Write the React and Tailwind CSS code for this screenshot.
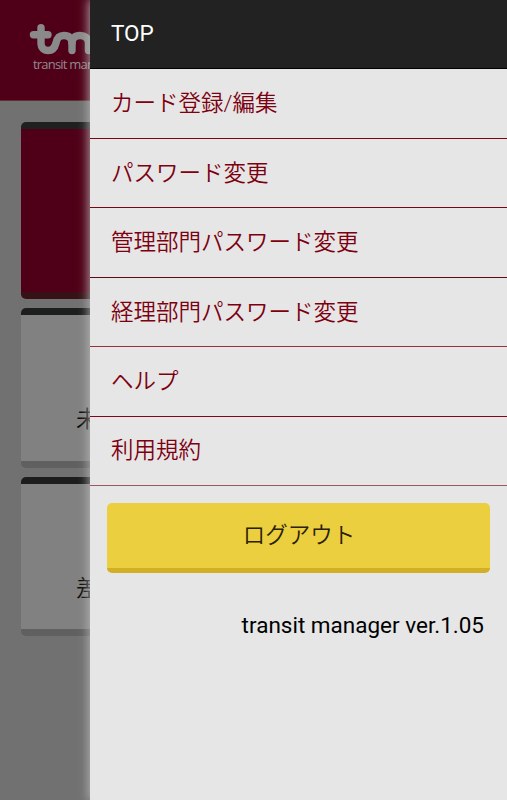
const menuItems = [
  { label: 'カード登録/編集', size: 'h-[70px]', line: 'border-[#7a0412]' },
  { label: 'パスワード変更', size: 'h-[69px] pt-px', line: 'border-[#7a0412]' },
  { label: '管理部門パスワード変更', size: 'h-[70px]', line: 'border-[#5e0810]' },
  { label: '経理部門パスワード変更', size: 'h-[69px] pt-px', line: 'border-[#95303c]' },
  { label: 'ヘルプ', size: 'h-[70px]', line: 'border-[#85041a]' },
  { label: '利用規約', size: 'h-[69px]', line: 'border-[#945a60]' },
];

function Logo() {
  return (
    <svg width="76" height="34" viewBox="0 0 76 34" fill="none" stroke="#8a8a8a" strokeWidth="7.4" strokeLinecap="round" strokeLinejoin="round">
      <path d="M4.5 13.700H19" />
      <path d="M12 6.700V22C12 27 15 29.500 19 29.500C24 29.500 26 26 27 22C28 17 30 14.500 35 14.500C40 14.500 43 17 43 22V29.500" />
      <path d="M43 22C43 17 46 14.500 51 14.500C56 14.500 59.500 17 59.500 22V29.500" />
    </svg>
  );
}

function Card({ label, className }) {
  return (
    <div className={`rounded-[5px] border-t-[7px] border-b-[7px] ${className}`}>
      {label && <p className="pl-[55px] text-[22.5px] leading-8 font-[350] text-[#080808]">{label}</p>}
    </div>
  );
}

function HomeScreen() {
  return (
    <div className="h-full bg-[#717171]">
      <header className="h-[101px] border-b border-[#603030] bg-[#4f0018] pt-[21px] pl-[29px]">
        <Logo />
        <p className="-mt-0.5 ml-1 font-['Open_Sans',sans-serif] text-[13px] leading-[22px] tracking-[-0.8px] text-[#938a8f]">transit manager</p>
      </header>
      <main className="flex flex-col gap-[9px] px-[21px] pt-[21px]">
        <Card className="h-[177px] border-t-[#202020] border-b-[#361216] bg-[#4f0018]" />
        <Card label="未" className="h-40 border-t-[#1d1f1e] border-b-[#606060] bg-[#818181] pt-[88px]" />
        <Card label="差" className="h-[159px] border-t-[#1d1d1d] border-b-[#606060] bg-[#818181] pt-[88px]" />
      </main>
    </div>
  );
}

function Drawer() {
  return (
    <aside className="absolute inset-y-0 right-0 w-[417px] bg-[#e6e6e6] shadow-[0_0_10px_1px_rgba(190,190,190,0.9)]">
      <div className="flex h-[69px] items-center border-b border-black bg-[#222] pl-[21px] text-[22.5px] text-white">TOP</div>
      <nav>
        {menuItems.map((item) => (
          <a key={item.label} className={`flex items-center border-b pl-[21px] text-[22.5px] font-[350] text-[#7c0010] ${item.size} ${item.line}`}>
            {item.label}
          </a>
        ))}
      </nav>
      <div className="px-[17px] pt-[17px]">
        <button className="flex h-[70px] w-full items-center justify-center rounded-[5px] border-b-[5px] border-[#d3af26] bg-[#ebcf3e] pl-px text-[22.5px] font-[350] text-[#2c2006]">
          ログアウト
        </button>
      </div>
      <p className="mt-9 pr-[23px] text-right text-[22.5px] leading-8 text-black">transit manager ver.1.05</p>
    </aside>
  );
}

export default function App() {
  return (
    <div className="relative h-screen w-full overflow-hidden font-[Roboto,'Noto_Sans_CJK_JP',sans-serif]">
      <HomeScreen />
      <Drawer />
    </div>
  );
}
